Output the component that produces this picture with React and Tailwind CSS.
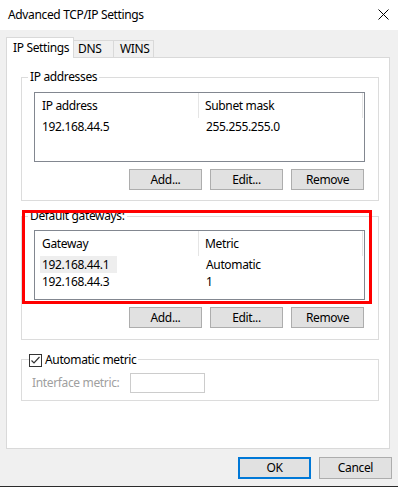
import React from 'react';

const font = { fontFamily: '"Noto Sans", "Segoe UI", sans-serif' };

function Button({ children, primary }) {
  return (
    <div
      className={
        'flex items-center justify-center w-[73px] h-[22px] bg-[#e1e1e1] text-black ' +
        (primary ? 'border-2 border-[#0078d7]' : 'border border-[#adadad]')
      }
    >
      {children}
    </div>
  );
}

function SmallButton({ children }) {
  return (
    <div className="flex items-center justify-center w-[73px] h-[21px] bg-[#e1e1e1] border border-[#adadad]">
      {children}
    </div>
  );
}

function ListView({ cols, rows, highlight }) {
  return (
    <div className="ml-[12px] w-[331px] h-[70px] border border-[#828790] bg-white">
      <div className="flex h-[25px] items-center">
        <div className="w-[164px] h-full pl-[7px] flex items-center border-r border-[#e5e5e5]">{cols[0]}</div>
        <div className="w-[164px] h-full pl-[6px] flex items-center border-r border-[#e5e5e5]">{cols[1]}</div>
      </div>
      {rows.map((r, i) => (
        <div key={i} className="flex h-[17px] items-center">
          <div className="w-[164px] pl-[5px] flex">
            <span className={'px-[2px] leading-[17px] ' + (highlight && i === 0 ? 'bg-[#eeeeee] pr-[8px]' : '')}>{r[0]}</span>
          </div>
          <div className="w-[164px] pl-[7px] leading-[17px]">{r[1]}</div>
        </div>
      ))}
    </div>
  );
}

function GroupBox({ label, className, children }) {
  return (
    <div className={'relative ml-[14px] w-[358px] border border-[#dcdcdc] ' + className}>
      <div className="absolute left-[6px] -top-[9px] bg-white px-[2px] leading-[16px] whitespace-nowrap">{label}</div>
      {children}
    </div>
  );
}

export default function App() {
  return (
    <div className="relative w-[398px] h-[487px] bg-[#f0f0f0] text-[12px] tracking-[-0.35px] text-black border-b border-[#2b2b2b] overflow-hidden whitespace-nowrap" style={font}>
      {/* Title bar */}
      <div className="flex items-center justify-between h-[30px] bg-white pl-[8px] pr-[9px]">
        <span>Advanced TCP/IP Settings</span>
        <svg width="11" height="11" viewBox="0 0 11 11" className="mt-[-1px]">
          <path d="M0.5 0.5L10.5 10.5M10.5 0.5L0.5 10.5" stroke="#000" strokeWidth="1" />
        </svg>
      </div>

      {/* Tabs */}
      <div className="flex items-end pl-[6px] mt-[7px] h-[20px]">
        <div className="relative z-10 h-[21px] mb-[-1px] w-[68px] border border-b-0 border-[#d9d9d9] bg-white flex items-center pl-[6px] pb-[1px]">
          IP Settings
        </div>
        <div className="h-[17px] w-[40px] border-t border-r border-[#d9d9d9] flex items-center pl-[4px]">DNS</div>
        <div className="h-[17px] w-[40px] border-t border-r border-[#d9d9d9] flex items-center pl-[6px]">WINS</div>
      </div>

      {/* Tab panel */}
      <div className="ml-[6px] w-[384px] h-[392px] border border-[#d9d9d9] bg-white pt-[19px]">
        <GroupBox label="IP addresses" className="h-[124px] pt-[14px]">
          <ListView cols={['IP address', 'Subnet mask']} rows={[['192.168.44.5', '255.255.255.0']]} />
          <div className="flex justify-end gap-[8px] pr-[14px] mt-[7px]">
            <SmallButton>Add...</SmallButton>
            <SmallButton>Edit...</SmallButton>
            <SmallButton>Remove</SmallButton>
          </div>
        </GroupBox>

        <GroupBox label="Default gateways:" className="h-[124px] pt-[13px] mt-[15px]">
          <ListView
            cols={['Gateway', 'Metric']}
            rows={[
              ['192.168.44.1', 'Automatic'],
              ['192.168.44.3', '1'],
            ]}
            highlight
          />
          <div className="flex justify-end gap-[8px] pr-[14px] mt-[7px]">
            <SmallButton>Add...</SmallButton>
            <SmallButton>Edit...</SmallButton>
            <SmallButton>Remove</SmallButton>
          </div>
        </GroupBox>

        <div className="relative ml-[14px] w-[358px] h-[42px] mt-[19px] border border-[#dcdcdc]">
          <div className="absolute left-[7px] -top-[8px] bg-white pr-[2px] flex items-center gap-[3px] leading-[16px]">
            <div className="w-[13px] h-[13px] border border-[#333333] bg-white flex items-center justify-center">
              <svg width="11" height="11" viewBox="0 0 11 11">
                <path d="M1.5 5.5L4 8L9.5 2" stroke="#333" strokeWidth="1.2" fill="none" />
              </svg>
            </div>
            <span>Automatic metric</span>
          </div>
          <div className="flex items-center mt-[13px] pl-[10px]">
            <span className="w-[98px] text-[#a0a0a0]">Interface metric:</span>
            <div className="w-[75px] h-[20px] border border-[#cccccc] bg-white" />
          </div>
        </div>
      </div>

      {/* Dialog buttons */}
      <div className="flex justify-end gap-[8px] pr-[6px] mt-[8px]">
        <Button primary>OK</Button>
        <Button>Cancel</Button>
      </div>

      {/* Annotation highlight */}
      <div className="absolute left-[22px] top-[210px] w-[350px] h-[94px] border-[3px] border-[#ff0000] pointer-events-none" />
    </div>
  );
}
